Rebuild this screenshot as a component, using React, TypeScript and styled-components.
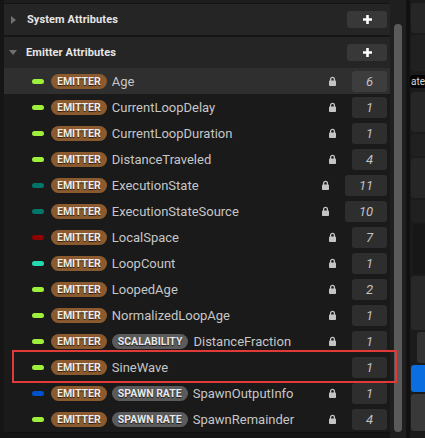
import React from 'react';
import styled, { createGlobalStyle } from 'styled-components';

const GlobalStyle = createGlobalStyle`
  html, body {
    margin: 0;
    padding: 0;
    background: #151515;
  }
  * { box-sizing: border-box; }
`;

type Attr = {
  dot: string;
  tags: string[];
  name: string;
  value: string;
  locked: boolean;
};

const attrs: Attr[] = [
  { dot: '#9ef03c', tags: ['EMITTER'], name: 'Age', value: '6', locked: true },
  { dot: '#9ef03c', tags: ['EMITTER'], name: 'CurrentLoopDelay', value: '1', locked: true },
  { dot: '#9ef03c', tags: ['EMITTER'], name: 'CurrentLoopDuration', value: '1', locked: true },
  { dot: '#9ef03c', tags: ['EMITTER'], name: 'DistanceTraveled', value: '4', locked: true },
  { dot: '#00766a', tags: ['EMITTER'], name: 'ExecutionState', value: '11', locked: true },
  { dot: '#00766a', tags: ['EMITTER'], name: 'ExecutionStateSource', value: '10', locked: true },
  { dot: '#8e0202', tags: ['EMITTER'], name: 'LocalSpace', value: '7', locked: true },
  { dot: '#22dcb0', tags: ['EMITTER'], name: 'LoopCount', value: '1', locked: true },
  { dot: '#9ef03c', tags: ['EMITTER'], name: 'LoopedAge', value: '2', locked: true },
  { dot: '#9ef03c', tags: ['EMITTER'], name: 'NormalizedLoopAge', value: '1', locked: true },
  { dot: '#9ef03c', tags: ['EMITTER', 'SCALABILITY'], name: 'DistanceFraction', value: '1', locked: true },
  { dot: '#9ef03c', tags: ['EMITTER'], name: 'SineWave', value: '1', locked: false },
  { dot: '#0052cc', tags: ['EMITTER', 'SPAWN RATE'], name: 'SpawnOutputInfo', value: '1', locked: true },
  { dot: '#9ef03c', tags: ['EMITTER', 'SPAWN RATE'], name: 'SpawnRemainder', value: '4', locked: true },
];

const Screen = styled.div`
  position: relative;
  width: 425px;
  height: 438px;
  display: flex;
  background: #151515;
  font-family: Roboto, 'Liberation Sans', sans-serif;
  overflow: hidden;
`;

const ListPanel = styled.div`
  width: 390px;
  padding-left: 4px;
  display: flex;
  flex-direction: column;
  background: #151515;
`;

const TopStrip = styled.div`
  height: 4px;
  background: #1d1d1d;
  border-bottom: 1px solid #141414;
`;

const SectionHeader = styled.div<{ $gapTop?: boolean }>`
  height: 31px;
  margin-top: ${p => (p.$gapTop ? '2px' : '0')};
  display: flex;
  align-items: center;
  padding: 0 3px 0 4px;
  background: #252525;
  color: #e6e6e6;
  font-size: 11px;
  font-weight: 700;
  letter-spacing: 0.1px;
`;

const Caret = styled.span<{ $open?: boolean }>`
  width: 0;
  height: 0;
  ${p =>
    p.$open
      ? `border-left: 4.5px solid transparent;
         border-right: 4.5px solid transparent;
         border-top: 5px solid #707070;
         margin-left: 1px;
         margin-right: 9px;`
      : `border-top: 4.5px solid transparent;
         border-bottom: 4.5px solid transparent;
         border-left: 5px solid #707070;
         margin-left: 3px;
         margin-right: 11px;`}
`;

const HeaderTitle = styled.span`
  flex: 1;
`;

const AddButton = styled.div`
  width: 40px;
  height: 17px;
  border-radius: 3px;
  background: #383838;
  display: flex;
  align-items: center;
  justify-content: center;
`;

const Rows = styled.div`
  display: flex;
  flex-direction: column;
  background: #1a1a1a;
`;

const Row = styled.div<{ $active?: boolean }>`
  height: 26px;
  display: flex;
  align-items: center;
  padding: 0 3px 0 28px;
  background: ${p => (p.$active ? '#2f2f2f' : '#1a1a1a')};
`;

const Dot = styled.span<{ $color: string }>`
  width: 12px;
  height: 5px;
  border-radius: 3px;
  background: ${p => p.$color};
  margin-right: 7px;
  flex-shrink: 0;
`;

const Tag = styled.span<{ $kind: 'source' | 'stage' }>`
  height: 15px;
  padding: 0 6px;
  margin-right: 5px;
  border-radius: 8px;
  display: inline-flex;
  align-items: center;
  font-size: 10.5px;
  font-weight: 700;
  color: ${p => (p.$kind === 'source' ? '#f4ece4' : '#e8e8e8')};
  background: ${p => (p.$kind === 'source' ? '#8b5b2f' : '#5b5b5b')};
  text-shadow: 0 1px 1px rgba(0, 0, 0, 0.75);
  flex-shrink: 0;
`;

const Name = styled.span`
  flex: 1;
  color: #c6c6c6;
  font-size: 13px;
  white-space: nowrap;
  overflow: hidden;
`;

const LockSlot = styled.span`
  width: 7px;
  height: 10px;
  margin-right: 16px;
  display: flex;
  flex-shrink: 0;
`;

const ValueBox = styled.div<{ $active?: boolean; $wide?: boolean }>`
  width: ${p => (p.$wide ? '42px' : '35px')};
  height: 21px;
  border-radius: 3px;
  background: ${p => (p.$active ? '#3d3d3d' : '#2e2e2e')};
  color: #c2c2c2;
  font-size: 13px;
  font-style: italic;
  display: flex;
  align-items: center;
  justify-content: center;
  flex-shrink: 0;
`;

const BottomStrip = styled.div`
  flex: 1;
  background: #151515;
  border-top: 1px solid #111;
`;

const ScrollTrack = styled.div`
  width: 16px;
  padding: 24px 4px 6px;
  background: #1f1f1f;
  display: flex;
`;

const ScrollThumb = styled.div`
  flex: 1;
  border-radius: 4px;
  background: #5a5a5a;
`;

const Splitter = styled.div`
  width: 4px;
  background: #111111;
`;

const SidePanel = styled.div`
  flex: 1;
  display: flex;
  flex-direction: column;
  gap: 2px;
  padding-top: 3px;
  background: #1b1b1b;
  overflow: hidden;
`;

const SideBlock = styled.div<{ $h: number; $bg: string; $inset?: number }>`
  height: ${p => p.$h}px;
  margin-left: ${p => p.$inset ?? 1}px;
  background: ${p => p.$bg};
  border-radius: 3px 0 0 3px;
  flex-shrink: 0;
`;

const SideChip = styled.div`
  height: 13px;
  margin: 2px 0;
  padding-left: 1px;
  background: #050505;
  border-radius: 3px 0 0 3px;
  color: #d8d8d8;
  font-size: 10px;
  line-height: 13px;
  flex-shrink: 0;
`;

const Highlight = styled.div`
  position: absolute;
  left: 12px;
  top: 350px;
  width: 385px;
  height: 33px;
  border: 2px solid #e23a36;
  pointer-events: none;
`;

const PlusIcon = () => (
  <svg width="11" height="11" viewBox="0 0 11 11">
    <path d="M5.5 1v9M1 5.5h9" stroke="#ffffff" strokeWidth="2.6" />
  </svg>
);

const LockIcon = () => (
  <svg width="7" height="10" viewBox="0 0 7 10">
    <path d="M1.6 5V3.2a1.9 1.9 0 0 1 3.8 0V5" fill="none" stroke="#c4c4c4" strokeWidth="1.3" />
    <rect x="0" y="4.6" width="7" height="5.4" rx="0.8" fill="#c4c4c4" />
  </svg>
);

export default function App() {
  return (
    <>
      <GlobalStyle />
      <Screen>
        <ListPanel>
          <TopStrip />
          <SectionHeader>
            <Caret />
            <HeaderTitle>System Attributes</HeaderTitle>
            <AddButton>
              <PlusIcon />
            </AddButton>
          </SectionHeader>
          <SectionHeader $gapTop>
            <Caret $open />
            <HeaderTitle>Emitter Attributes</HeaderTitle>
            <AddButton>
              <PlusIcon />
            </AddButton>
          </SectionHeader>
          <Rows>
            {attrs.map((a, i) => (
              <Row key={a.name} $active={i === 0}>
                <Dot $color={a.dot} />
                {a.tags.map((t, j) => (
                  <Tag key={t} $kind={j === 0 ? 'source' : 'stage'}>
                    {t}
                  </Tag>
                ))}
                <Name>{a.name}</Name>
                {a.locked && (
                  <LockSlot>
                    <LockIcon />
                  </LockSlot>
                )}
                <ValueBox $active={i === 0} $wide={a.value.length > 1}>
                  {a.value}
                </ValueBox>
              </Row>
            ))}
          </Rows>
          <BottomStrip />
        </ListPanel>
        <ScrollTrack>
          <ScrollThumb />
        </ScrollTrack>
        <Splitter />
        <SidePanel>
          <SideBlock $h={30} $bg="#262626" />
          <SideBlock $h={36} $bg="#202020" />
          <SideChip>ate</SideChip>
          <SideBlock $h={40} $bg="#262626" />
          <SideBlock $h={22} $bg="#202020" />
          <SideBlock $h={40} $bg="#262626" />
          <SideBlock $h={22} $bg="#202020" />
          <SideBlock $h={50} $bg="#171717" $inset={3} />
          <SideBlock $h={54} $bg="#282828" />
          <SideBlock $h={31} $bg="#323232" $inset={7} />
          <SideBlock $h={27} $bg="#0a6ee0" />
          <SideBlock $h={37} $bg="#393939" />
        </SidePanel>
        <Highlight />
      </Screen>
    </>
  );
}
